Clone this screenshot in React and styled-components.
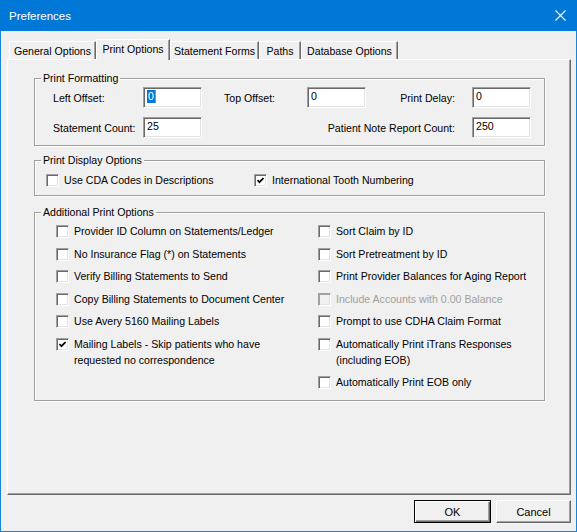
import React from "react";
import styled, { createGlobalStyle } from "styled-components";

const GlobalStyle = createGlobalStyle`
  html, body {
    margin: 0;
    padding: 0;
    background: #f0f0f0;
  }
  body {
    font-family: "Liberation Sans", Arial, sans-serif;
    font-size: 10.6px;
    color: #000;
  }
`;

const Window = styled.div`
  width: 577px;
  height: 532px;
  box-sizing: border-box;
  border: 1px solid #1883d7;
  border-top: none;
  background: #f0f0f0;
  display: flex;
  flex-direction: column;
`;

const TitleBar = styled.div`
  height: 31px;
  flex-shrink: 0;
  margin: 0 -1px;
  padding: 0 11px 0 9px;
  display: flex;
  align-items: center;
  justify-content: space-between;
  background: #0078d7;
  color: #fff;
  font-size: 11.5px;
`;

const Body = styled.div`
  flex: 1;
  display: flex;
  flex-direction: column;
  padding: 8px 5px 0 6px;
`;

const TabStrip = styled.div`
  height: 20px;
  display: flex;
  align-items: flex-end;
  padding-left: 2px;
`;

const Tab = styled.div`
  box-sizing: border-box;
  width: ${(p) => p.$w}px;
  height: ${(p) => (p.$active ? 21 : 18)}px;
  margin-bottom: ${(p) => (p.$active ? -1 : 0)}px;
  position: relative;
  z-index: ${(p) => (p.$active ? 2 : 1)};
  display: flex;
  align-items: center;
  justify-content: center;
  padding-bottom: ${(p) => (p.$active ? 3 : 0)}px;
  background: #f0f0f0;
  border-top: 1px solid #fff;
  border-left: 1px solid #fff;
  border-right: 1px solid #696969;
  box-shadow: inset -1px 0 0 #a0a0a0;
  font-size: 10.6px;
  white-space: nowrap;
`;

const Panel = styled.div`
  box-sizing: border-box;
  height: 436px;
  display: flex;
  flex-direction: column;
  padding: 0 25px 0 26px;
  border-top: 1px solid #fff;
  border-left: 1px solid #fff;
  border-right: 1px solid #696969;
  border-bottom: 1px solid #696969;
  box-shadow: inset -1px -1px 0 #a0a0a0;
`;

const GroupBox = styled.div`
  display: flex;
  flex-direction: column;
  margin-top: ${(p) => p.$top}px;
  border: 1px solid #a0a0a0;
  box-shadow: inset 1px 1px 0 #fff, 1px 1px 0 #fff;
`;

const Legend = styled.div`
  align-self: flex-start;
  margin: -7px 0 0 6px;
  padding: 0 2px;
  height: 13px;
  line-height: 13px;
  background: #f0f0f0;
`;

const FormatGrid = styled.div`
  display: grid;
  grid-template-columns: 90px 59px 22px 83px 59px 1fr 59px;
  grid-auto-rows: 21px;
  row-gap: 9px;
  align-items: center;
  padding: 2px 13px 7px 18px;
`;

const FieldLabel = styled.div`
  grid-column: ${(p) => p.$col || "auto"};
  justify-self: ${(p) => (p.$right ? "end" : "start")};
  margin-right: ${(p) => (p.$right ? 17 : 0)}px;
  white-space: nowrap;
`;

const Field = styled.div`
  box-sizing: border-box;
  width: 59px;
  height: 21px;
  padding: 2px 0 0 3px;
  line-height: 13px;
  background: #fff;
  border-top: 1px solid #a0a0a0;
  border-left: 1px solid #a0a0a0;
  border-bottom: 1px solid #fff;
  border-right: 1px solid #fff;
  box-shadow: inset 1px 1px 0 #696969, inset -1px -1px 0 #e3e3e3;
`;

const Selected = styled.span`
  display: inline-block;
  padding: 0 1px;
  background: #0078d7;
  color: #fff;
  border-right: 1px solid #f08020;
`;

const DisplayRow = styled.div`
  display: grid;
  grid-template-columns: 208px 1fr;
  padding: 5px 11px 7px 11px;
`;

const Columns = styled.div`
  display: grid;
  grid-template-columns: 262px 1fr;
  padding: 4px 10px 10px 21px;
`;

const Column = styled.div`
  display: flex;
  flex-direction: column;
  gap: 6.5px;
`;

const CheckRow = styled.div`
  display: flex;
  align-items: flex-start;
  gap: 5px;
  line-height: 16px;
  color: ${(p) => (p.$disabled ? "#a0a0a0" : "#000")};
  white-space: nowrap;
`;

const Box = styled.span`
  box-sizing: border-box;
  flex-shrink: 0;
  width: 13px;
  height: 13px;
  margin-top: 2px;
  display: flex;
  align-items: center;
  justify-content: center;
  background: ${(p) => (p.$disabled ? "#f0f0f0" : "#fff")};
  border-top: 1px solid #a0a0a0;
  border-left: 1px solid #a0a0a0;
  border-bottom: 1px solid #fff;
  border-right: 1px solid #fff;
  box-shadow: inset 1px 1px 0 ${(p) => (p.$disabled ? "#a0a0a0" : "#696969")},
    inset -1px -1px 0 #e3e3e3;
`;

const ButtonRow = styled.div`
  display: flex;
  justify-content: flex-end;
  gap: 5px;
  margin-top: 5px;
`;

const Button = styled.div`
  box-sizing: border-box;
  width: ${(p) => p.$w}px;
  height: 23px;
  display: flex;
  align-items: center;
  justify-content: center;
  background: #f0f0f0;
  font-size: 11px;
  border: 1px solid ${(p) => (p.$default ? "#000" : "#fff")};
  ${(p) =>
    p.$default
      ? "box-shadow: inset 1px 1px 0 #fff, inset -1px -1px 0 #696969, inset -2px -2px 0 #a0a0a0;"
      : "border-right-color: #696969; border-bottom-color: #696969; box-shadow: inset -1px -1px 0 #a0a0a0;"}
`;

function CloseIcon() {
  return (
    <svg width="11" height="11" viewBox="0 0 11 11">
      <path d="M0.5 0.5 L10.5 10.5 M10.5 0.5 L0.5 10.5" stroke="#fff" strokeWidth="1.1" />
    </svg>
  );
}

function Check({ checked, disabled, children }) {
  return (
    <CheckRow $disabled={disabled}>
      <Box $disabled={disabled}>
        {checked ? (
          <svg width="7" height="7" viewBox="0 0 7 7">
            <path d="M0.5 3 L2.5 5.2 L6.5 1" fill="none" stroke="#000" strokeWidth="1.7" />
          </svg>
        ) : null}
      </Box>
      <span>{children}</span>
    </CheckRow>
  );
}

const tabs = [
  { label: "General Options", w: 87 },
  { label: "Print Options", w: 74, active: true },
  { label: "Statement Forms", w: 89 },
  { label: "Paths", w: 42 },
  { label: "Database Options", w: 97 },
];

export default function App() {
  return (
    <>
      <GlobalStyle />
      <Window>
        <TitleBar>
          <span>Preferences</span>
          <CloseIcon />
        </TitleBar>
        <Body>
          <TabStrip>
            {tabs.map((t) => (
              <Tab key={t.label} $w={t.w} $active={t.active}>
                {t.label}
              </Tab>
            ))}
          </TabStrip>
          <Panel>
            <GroupBox $top={18}>
              <Legend>Print Formatting</Legend>
              <FormatGrid>
                <FieldLabel>Left Offset:</FieldLabel>
                <Field>
                  <Selected>0</Selected>
                </Field>
                <span />
                <FieldLabel>Top Offset:</FieldLabel>
                <Field>0</Field>
                <FieldLabel $right>Print Delay:</FieldLabel>
                <Field>0</Field>

                <FieldLabel>Statement Count:</FieldLabel>
                <Field>25</Field>
                <FieldLabel $col="3 / 7" $right>
                  Patient Note Report Count:
                </FieldLabel>
                <Field>250</Field>
              </FormatGrid>
            </GroupBox>

            <GroupBox $top={14}>
              <Legend>Print Display Options</Legend>
              <DisplayRow>
                <Check>Use CDA Codes in Descriptions</Check>
                <Check checked>International Tooth Numbering</Check>
              </DisplayRow>
            </GroupBox>

            <GroupBox $top={16}>
              <Legend>Additional Print Options</Legend>
              <Columns>
                <Column>
                  <Check>Provider ID Column on Statements/Ledger</Check>
                  <Check>No Insurance Flag (*) on Statements</Check>
                  <Check>Verify Billing Statements to Send</Check>
                  <Check>Copy Billing Statements to Document Center</Check>
                  <Check>Use Avery 5160 Mailing Labels</Check>
                  <Check checked>
                    Mailing Labels - Skip patients who have
                    <br />
                    requested no correspondence
                  </Check>
                </Column>
                <Column>
                  <Check>Sort Claim by ID</Check>
                  <Check>Sort Pretreatment by ID</Check>
                  <Check>Print Provider Balances for Aging Report</Check>
                  <Check disabled>Include Accounts with 0.00 Balance</Check>
                  <Check>Prompt to use CDHA Claim Format</Check>
                  <Check>
                    Automatically Print iTrans Responses
                    <br />
                    (including EOB)
                  </Check>
                  <Check>Automatically Print EOB only</Check>
                </Column>
              </Columns>
            </GroupBox>
          </Panel>
          <ButtonRow>
            <Button $w={77} $default>
              OK
            </Button>
            <Button $w={75}>Cancel</Button>
          </ButtonRow>
        </Body>
      </Window>
    </>
  );
}
